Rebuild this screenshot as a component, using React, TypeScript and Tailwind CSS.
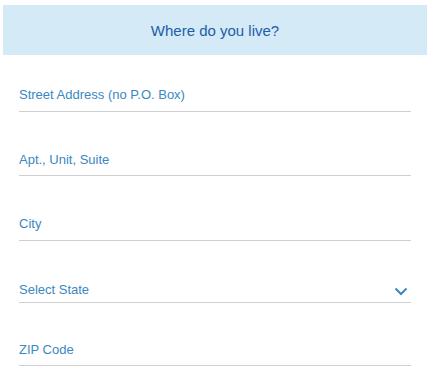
export default function App() {
  const fields = [
    { label: 'Street Address (no P.O. Box)', h: 'h-[57px]', pb: 'pb-[8px]' },
    { label: 'Apt., Unit, Suite', h: 'h-[64px]', pb: 'pb-[7px]' },
    { label: 'City', h: 'h-[65px]', pb: 'pb-[8px]' },
    { label: 'Select State', h: 'h-[62px]', pb: 'pb-[4px]', select: true },
    { label: 'ZIP Code', h: 'h-[63px]', pb: 'pb-[7px]' },
  ];

  return (
    <div className="w-[436px] h-[374px] bg-white pt-[5px] font-['Liberation_Sans',Arial,sans-serif]">
      {/* Header */}
      <div className="ml-[3px] w-[424px] h-[50px] bg-[#d4eaf7] flex items-center justify-center">
        <h1 className="text-[15px] text-[#1d5ea8] leading-none">Where do you live?</h1>
      </div>

      {/* Form fields */}
      <div className="pl-[19px] pr-[25px]">
        {fields.map((f) => (
          <div
            key={f.label}
            className={`${f.h} ${f.pb} flex items-end justify-between border-b border-[#d0d0d0]`}
          >
            <span className="text-[13px] leading-[16px] text-[#3a88c2]">{f.label}</span>
            {f.select && (
              <svg width="14" height="9" viewBox="0 0 14 9" className="mr-[3px] mb-[2px]">
                <path d="M1.5 1.5 L7 7 L12.5 1.5" fill="none" stroke="#3a88c2" strokeWidth="2" />
              </svg>
            )}
          </div>
        ))}
      </div>
    </div>
  );
}
